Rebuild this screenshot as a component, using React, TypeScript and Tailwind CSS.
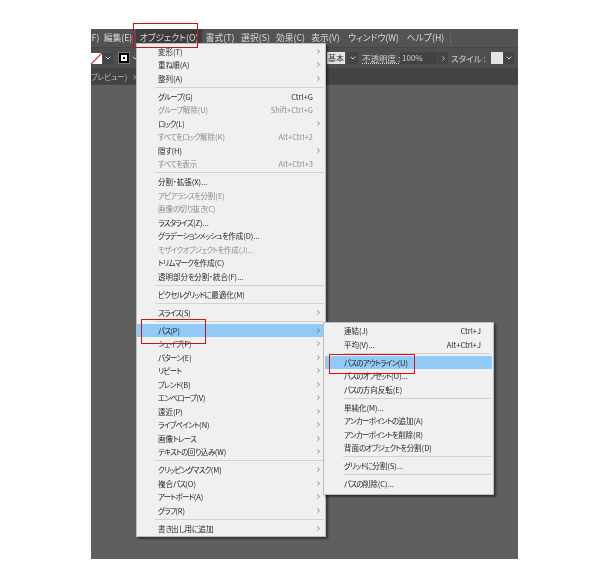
import { ChevronDown, ChevronRight } from "lucide-react";

type Row =
  | { sep: true }
  | { label: string; shortcut?: string; arrow?: boolean; disabled?: boolean; active?: boolean };

const S: Row = { sep: true };

const mainMenu: Row[] = [
  { label: "変形(T)", arrow: true },
  { label: "重ね順(A)", arrow: true },
  { label: "整列(A)", arrow: true },
  S,
  { label: "グループ(G)", shortcut: "Ctrl+G" },
  { label: "グループ解除(U)", shortcut: "Shift+Ctrl+G", disabled: true },
  { label: "ロック(L)", arrow: true },
  { label: "すべてをロック解除(K)", shortcut: "Alt+Ctrl+2", disabled: true },
  { label: "隠す(H)", arrow: true },
  { label: "すべてを表示", shortcut: "Alt+Ctrl+3", disabled: true },
  S,
  { label: "分割・拡張(X)..." },
  { label: "アピアランスを分割(E)", disabled: true },
  { label: "画像の切り抜き(C)", disabled: true },
  { label: "ラスタライズ(Z)..." },
  { label: "グラデーションメッシュを作成(D)..." },
  { label: "モザイクオブジェクトを作成(J)...", disabled: true },
  { label: "トリムマークを作成(C)" },
  { label: "透明部分を分割・統合(F)..." },
  S,
  { label: "ピクセルグリッドに最適化(M)" },
  S,
  { label: "スライス(S)", arrow: true },
  S,
  { label: "パス(P)", arrow: true, active: true },
  { label: "シェイプ(P)", arrow: true },
  { label: "パターン(E)", arrow: true },
  { label: "リピート", arrow: true },
  { label: "ブレンド(B)", arrow: true },
  { label: "エンベロープ(V)", arrow: true },
  { label: "遠近(P)", arrow: true },
  { label: "ライブペイント(N)", arrow: true },
  { label: "画像トレース", arrow: true },
  { label: "テキストの回り込み(W)", arrow: true },
  S,
  { label: "クリッピングマスク(M)", arrow: true },
  { label: "複合パス(O)", arrow: true },
  { label: "アートボード(A)", arrow: true },
  { label: "グラフ(R)", arrow: true },
  S,
  { label: "書き出し用に追加", arrow: true },
];

const subMenu: Row[] = [
  { label: "連結(J)", shortcut: "Ctrl+J" },
  { label: "平均(V)...", shortcut: "Alt+Ctrl+J" },
  S,
  { label: "パスのアウトライン(U)", active: true },
  { label: "パスのオフセット(O)..." },
  { label: "パスの方向反転(E)" },
  S,
  { label: "単純化(M)..." },
  { label: "アンカーポイントの追加(A)" },
  { label: "アンカーポイントを削除(R)" },
  { label: "背面のオブジェクトを分割(D)" },
  S,
  { label: "グリッドに分割(S)..." },
  S,
  { label: "パスの削除(C)..." },
];

const menuBar = [
  { label: "F)", w: "w-[9px]" },
  { label: "編集(E)", w: "w-[36px]" },
  { label: "オブジェクト(O)", w: "w-[66px]", on: true },
  { label: "書式(T)", w: "w-[36px]" },
  { label: "選択(S)", w: "w-[35px]" },
  { label: "効果(C)", w: "w-[35px]" },
  { label: "表示(V)", w: "w-[35px]" },
  { label: "ウィンドウ(W)", w: "w-[61px]" },
  { label: "ヘルプ(H)", w: "w-[43px]" },
];

function Label({ text }: { text: string }) {
  const parts = text.split(/([ぁ-んァ-ヶー]+)/);
  return (
    <span>
      {parts.map((p, i) =>
        i % 2 === 1 ? (
          <span key={i} className="tracking-[-0.75px]">
            {p}
          </span>
        ) : (
          <span key={i}>{p}</span>
        ),
      )}
    </span>
  );
}

function Menu({ rows, pl, pr }: { rows: Row[]; pl: string; pr: string }) {
  return (
    <div className="flex flex-col">
      {rows.map((r, i) =>
        "sep" in r ? (
          <div key={i} className="h-[4.5px] flex items-center pl-[18px] pr-[1px]">
            <div className="h-px w-full bg-[#d2d2d2]" />
          </div>
        ) : (
          <div
            key={i}
            className={`h-[13.5px] flex items-center justify-between whitespace-nowrap ${pl} ${pr} ${
              r.active ? "bg-[#91c9f7]" : ""
            } ${r.disabled ? "text-[#8c8c8c]" : "text-[#262626]"}`}
          >
            <Label text={r.label} />
            {r.shortcut && <span>{r.shortcut}</span>}
            {r.arrow && <ChevronRight size={7} strokeWidth={2.5} className="text-[#555555] -mr-[9px]" />}
          </div>
        ),
      )}
    </div>
  );
}

export default function App() {
  return (
    <div className="relative w-[600px] h-[576px] bg-white overflow-hidden pt-[29px] pl-[91px] text-[7.5px] leading-none font-['Noto_Sans_CJK_JP','Noto_Sans',sans-serif] [font-feature-settings:'palt'] blur-[0.35px]">
      <div className="w-[427px] h-[530px] flex flex-col bg-[#5f5f5f]">
        <div className="h-[18px] bg-[#535353] flex items-center text-[#d8d8d8] text-[8.8px]">
          {menuBar.map((m) => (
            <div
              key={m.label}
              className={`${m.w} h-full flex items-center justify-center whitespace-nowrap ${m.on ? "bg-[#3d3d3d]" : ""}`}
            >
              {m.label}
            </div>
          ))}
          <div className="ml-[3px] h-[14px] w-px bg-[#666666]" />
        </div>

        <div className="h-[21px] bg-[#4e4e4e] border-t border-[#464646] flex items-center text-[#d0d0d0]">
          <div className="w-[11px] h-[11px] bg-white relative overflow-hidden">
            <svg viewBox="0 0 11 11" className="w-full h-full">
              <path d="M0 11 L11 0" stroke="#e02020" strokeWidth="1.2" />
            </svg>
          </div>
          <div className="ml-[1px] w-[10px] h-[11px] bg-[#444444] flex items-center justify-center">
            <ChevronDown size={8} strokeWidth={3} />
          </div>
          <div className="ml-[5px] w-[12px] h-[12px] bg-black border border-[#777777] flex items-center justify-center">
            <div className="w-[6px] h-[6px] bg-white flex items-center justify-center">
              <div className="w-[2px] h-[2px] bg-black" />
            </div>
          </div>
          <ChevronDown size={8} strokeWidth={3} className="ml-[1px]" />
          <div className="ml-[188px] w-[18px] h-[12px] bg-[#e6e6e6] text-[#333333] text-[8px] flex items-center justify-center">基本</div>
          <div className="ml-[2px] w-[11px] h-[12px] bg-[#444444] flex items-center justify-center">
            <ChevronDown size={8} strokeWidth={3} />
          </div>
          <span className="ml-[4px] w-[38px] whitespace-nowrap text-[8.5px] underline decoration-dotted">不透明度 :</span>
          <div className="w-[37px] h-[12px] bg-[#424242] text-[8px] flex items-center pl-[2px]">100%</div>
          <div className="ml-[1px] w-[10px] h-[12px] bg-[#444444] flex items-center justify-center">
            <ChevronRight size={7} strokeWidth={3} />
          </div>
          <span className="ml-[3px] w-[40px] whitespace-nowrap text-[8.5px]">スタイル :</span>
          <div className="w-[12px] h-[12px] bg-[#e4e4e4]" />
          <div className="ml-[1px] w-[10px] h-[12px] bg-[#444444] flex items-center justify-center">
            <ChevronDown size={8} strokeWidth={3} />
          </div>
        </div>

        <div className="h-[17px] bg-[#434343] flex items-center text-[#bdbdbd]">
          <span className="w-[40px] whitespace-nowrap">ブレビュー)</span>
          <span className="ml-[1px]">×</span>
        </div>

        <div className="flex-1 bg-[#5f5f5f]" />
      </div>

      {/* main dropdown */}
      <div className="absolute left-[136px] top-[43px] w-[190px] bg-[#f0f0f0] border border-[#bcbcbc] shadow-[2px_2px_2px_rgba(0,0,0,0.45)] py-[0.5px]">
        <Menu rows={mainMenu} pl="pl-[21px]" pr="pr-[12px]" />
      </div>

      {/* submenu */}
      <div className="absolute left-[323px] top-[322px] w-[171px] bg-[#f0f0f0] border border-[#bcbcbc] shadow-[2px_2px_2px_rgba(0,0,0,0.45)] pt-[1px] pb-[3px] px-px">
        <Menu rows={subMenu} pl="pl-[19px]" pr="pr-[11px]" />
      </div>

      {/* annotation boxes */}
      <div className="absolute left-[133px] top-[23px] w-[65px] h-[25px] border border-[#d01010]" />
      <div className="absolute left-[141px] top-[319px] w-[65px] h-[25px] border border-[#c01818]" />
      <div className="absolute left-[329px] top-[354px] w-[86px] h-[20px] border border-[#e01010]" />
    </div>
  );
}
